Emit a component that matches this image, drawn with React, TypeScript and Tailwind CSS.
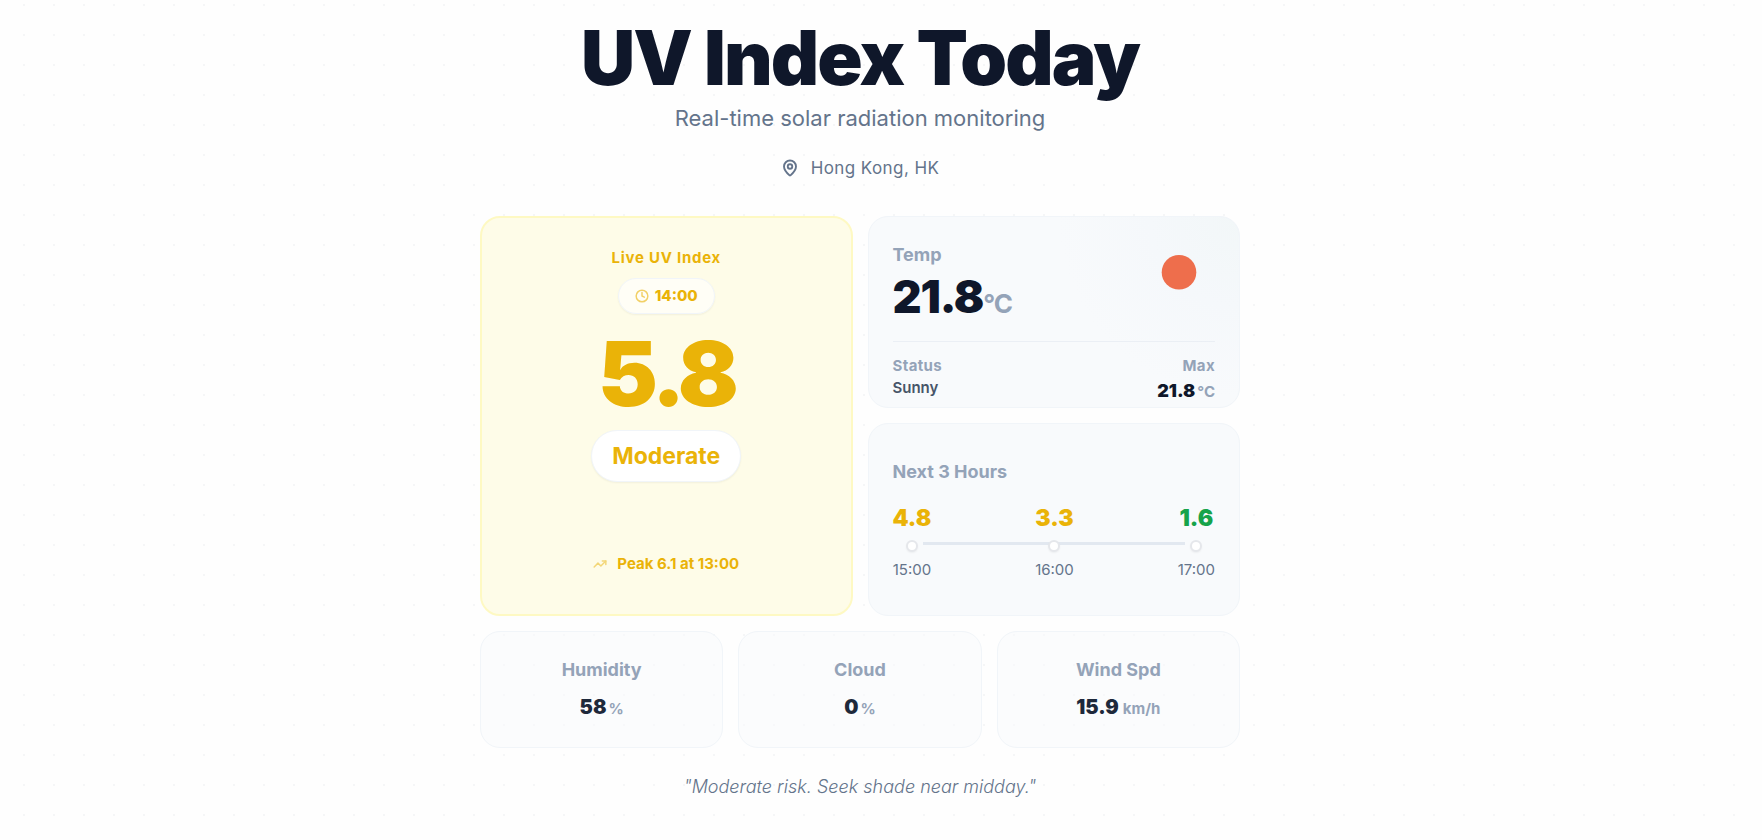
import { Clock, MapPin, TrendingUp } from "lucide-react";

type Hour = { time: string; value: string; color: string };
type Metric = { label: string; value: string; unit: string; gap: string };

const hours: Hour[] = [
  { time: "15:00", value: "4.8", color: "text-[#eab308]" },
  { time: "16:00", value: "3.3", color: "text-[#eab308]" },
  { time: "17:00", value: "1.6", color: "text-[#16a34a]" },
];

const metrics: Metric[] = [
  { label: "Humidity", value: "58", unit: "%", gap: "gap-0.5" },
  { label: "Cloud", value: "0", unit: "%", gap: "gap-0.5" },
  { label: "Wind Spd", value: "15.9", unit: "km/h", gap: "gap-1" },
];

const LiveCard = () => (
  <section className="row-span-2 flex flex-col items-center rounded-[20px] border-2 border-[#fef9c3] bg-[#fefce8] px-6 pt-7 text-[#eab308]">
    <h2 className="text-[15px] leading-6 font-bold tracking-wider">Live UV Index</h2>
    <div className="mt-2 flex h-9 items-center gap-1.5 rounded-full border border-slate-100 bg-white/60 px-4 shadow-xs">
      <Clock size={14} strokeWidth={2.5} className="opacity-60" />
      <span className="text-[15px] leading-6 font-extrabold">14:00</span>
    </div>
    <div className="mt-3 text-[90px] leading-24 font-black tracking-tighter">5.8</div>
    <div className="mt-2 flex h-13 items-center rounded-full border border-slate-100 bg-white px-5 text-[23px] font-bold shadow-xs">
      Moderate
    </div>
    <div className="mt-[70px] flex items-center gap-2.5">
      <TrendingUp size={14} strokeWidth={2.5} className="opacity-50" />
      <span className="text-[15px] leading-6 font-bold">Peak 6.1 at 13:00</span>
    </div>
  </section>
);

const TempCard = () => (
  <section className="overflow-hidden rounded-[20px] border border-[#f1f5f9] bg-[#f8fafc] bg-[radial-gradient(circle_at_100%_0%,#f2f7f8_0%,#f5f8fb_90px,#f8fafc_180px)] p-6">
    <div className="flex h-25 justify-between">
      <div>
        <h2 className="text-[18px] leading-7 font-bold text-[#94a3b8]">Temp</h2>
        <div className="mt-1 text-[45px] leading-12 font-black tracking-tight text-[#0f172a]">
          21.8<span className="text-[26px] font-bold text-[#94a3b8]">°C</span>
        </div>
      </div>
      <svg className="h-16 w-18" viewBox="0 0 72 64" role="img" aria-label="Sunny">
        <circle cx="36" cy="31.3" r="17.3" fill="#ee6e4c" />
      </svg>
    </div>
    <div className="flex justify-between border-t border-[#e2e8f0]/60 pt-3 text-[15px]">
      <div>
        <div className="leading-6 font-bold tracking-wide text-[#94a3b8]">Status</div>
        <div className="leading-5 font-semibold text-[#475569]">Sunny</div>
      </div>
      <div className="text-right">
        <div className="leading-6 font-bold tracking-wide text-[#94a3b8]">Max</div>
        <div className="flex items-baseline gap-0.5 text-[18px] leading-[26px] font-black text-[#0f172a]">
          21.8<span className="text-[15px] font-bold text-[#94a3b8]">°C</span>
        </div>
      </div>
    </div>
  </section>
);

const ForecastCard = () => (
  <section className="flex flex-col justify-center rounded-[20px] border border-[#f1f5f9] bg-[#f8fafc] px-6">
    <h2 className="text-[18px] leading-7 font-bold text-[#94a3b8]">Next 3 Hours</h2>
    <ol className="relative mt-4 flex justify-between before:absolute before:inset-x-7.5 before:top-10 before:h-[3px] before:bg-[#e2e8f0]">
      {hours.map((hour) => (
        <li key={hour.time} className="relative flex flex-col items-center">
          <span className={`text-[23px] leading-8 font-black ${hour.color}`}>{hour.value}</span>
          <span className="mt-1.5 size-3 rounded-full border-2 border-[#e5e7eb] bg-white shadow-xs" />
          <span className="mt-1.5 text-[15px] leading-6 text-[#64748b]">{hour.time}</span>
        </li>
      ))}
    </ol>
  </section>
);

const MetricCard = ({ label, value, unit, gap }: Metric) => (
  <section className="flex flex-col items-center rounded-[20px] border border-[#f1f5f9] bg-[#f8fafc]/60 pt-6 pb-[23px]">
    <h2 className="text-[18px] leading-7 font-bold text-[#94a3b8]">{label}</h2>
    <div className={`mt-2 flex items-baseline text-[20px] leading-[30px] font-black text-[#1e293b] ${gap}`}>
      {value}
      <span className="text-[15px] font-bold text-[#94a3b8]">{unit}</span>
    </div>
  </section>
);

const App = () => {
  return (
    <div className="min-h-screen bg-[#fefefe] bg-[radial-gradient(#f5f6f7_1px,transparent_1px)] bg-size-[30px_30px] bg-position-[9px_-10px] pr-[42px] font-['Inter',sans-serif]">
      <main className="mx-auto max-w-[760px] pt-3.5 pb-8">
        <header className="text-center">
          <h1 className="text-[75px] leading-22 font-black tracking-tight text-[#0f172a]">
            UV Index Today
          </h1>
          <p className="text-[22px] leading-8 text-[#64748b]">Real-time solar radiation monitoring</p>
          <div className="mt-5 flex items-center justify-center gap-3 text-[#64748b]">
            <MapPin size={18} strokeWidth={2.5} />
            <span className="text-[17px] leading-7 tracking-wide">Hong Kong, HK</span>
          </div>
        </header>

        <div className="mt-[34px] grid grid-cols-2 grid-rows-[192px_193px] gap-[15px]">
          <LiveCard />
          <TempCard />
          <ForecastCard />
        </div>
        <div className="mt-[15px] grid grid-cols-3 gap-[15px]">
          {metrics.map((metric) => (
            <MetricCard key={metric.label} {...metric} />
          ))}
        </div>

        <p className="mt-[25px] text-center text-[18px] leading-7 font-light text-[#64748b] italic">
          "Moderate risk. Seek shade near midday."
        </p>
      </main>
    </div>
  );
};

export default App;
